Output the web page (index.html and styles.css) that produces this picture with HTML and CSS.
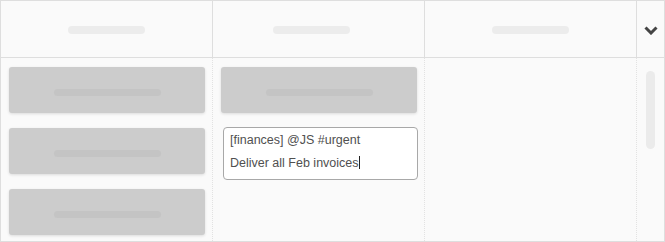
FILE: index.html
```html
<!DOCTYPE html>
<html>
<head>
<meta charset="utf-8">
<link rel="stylesheet" href="styles.css">
</head>
<body>
<div class="board">
  <div class="head">
    <div class="hcol"><span class="hpill"></span></div>
    <div class="hcol hcol-shift"><span class="hpill"></span></div>
    <div class="hcol"><span class="hpill"></span></div>
    <div class="hcol hcol-menu">
      <svg class="chev" width="14" height="9" viewBox="0 0 14 9"><path d="M1.5 1.5 L7 7 L12.5 1.5" fill="none" stroke="#444" stroke-width="3" stroke-linecap="butt"/></svg>
    </div>
  </div>
  <div class="body">
    <div class="col">
      <div class="card"><span class="cpill"></span></div>
      <div class="card"><span class="cpill"></span></div>
      <div class="card"><span class="cpill"></span></div>
    </div>
    <div class="col">
      <div class="card"><span class="cpill"></span></div>
      <div class="editor">
        <div class="line">[finances] @JS #urgent</div>
        <div class="line">Deliver all Feb invoices<span class="caret"></span></div>
      </div>
    </div>
    <div class="col"></div>
    <div class="col col-scroll"><span class="thumb"></span></div>
  </div>
</div>
</body>
</html>
```
FILE: styles.css
```css
html, body {
  margin: 0;
  padding: 0;
  background: #fafafa;
}
.board {
  width: 665px;
  height: 242px;
  box-sizing: border-box;
  border: 1px solid #dedede;
  background: #fafafa;
  font-family: "Liberation Sans", Arial, sans-serif;
  display: flex;
  flex-direction: column;
}
.head {
  display: grid;
  grid-template-columns: 212px 212px 212px 1fr;
  height: 56px;
  border-bottom: 1px solid #dedede;
}
.hcol {
  border-right: 1px solid #dedede;
  display: flex;
  align-items: center;
  justify-content: center;
}
.hcol-shift {
  padding-right: 14px;
}
.hcol-menu {
  border-right: none;
}
.hpill {
  display: block;
  width: 77px;
  height: 8px;
  margin-top: 2px;
  border-radius: 4px;
  background: #ececec;
}
.chev {
  display: block;
  margin-top: 2px;
  margin-left: 1px;
}
.body {
  flex: 1;
  display: grid;
  grid-template-columns: 212px 212px 212px 1fr;
}
.col {
  border-right: 1px dotted #e2e2e2;
  padding: 8px 7px 0 8px;
  display: flex;
  flex-direction: column;
  gap: 14px;
}
.col-scroll {
  border-right: none;
  padding: 13px 0 0 9px;
}
.card {
  height: 46px;
  width: 196px;
  box-sizing: border-box;
  background: #cccccc;
  border-radius: 3px;
  box-shadow: 0 1px 3px rgba(0,0,0,0.12);
  display: flex;
  align-items: center;
  justify-content: center;
  margin-top: 1px;
}
.cpill {
  display: block;
  width: 107px;
  height: 7px;
  margin-top: 4px;
  border-radius: 4px;
  background: #c4c4c4;
}
.editor {
  width: 195px;
  height: 53px;
  box-sizing: border-box;
  margin-left: 2px;
  background: #fff;
  border: 1px solid #a8a8a8;
  border-radius: 4px;
  padding: 1px 0 0 6px;
  color: #505050;
  font-size: 12.5px;
}
.line {
  height: 23px;
  line-height: 23px;
  white-space: nowrap;
}
.caret {
  display: inline-block;
  width: 1px;
  height: 13px;
  background: #222;
  vertical-align: -2px;
}
.thumb {
  display: block;
  width: 9px;
  height: 78px;
  border-radius: 5px;
  background: #ebebeb;
}
```
